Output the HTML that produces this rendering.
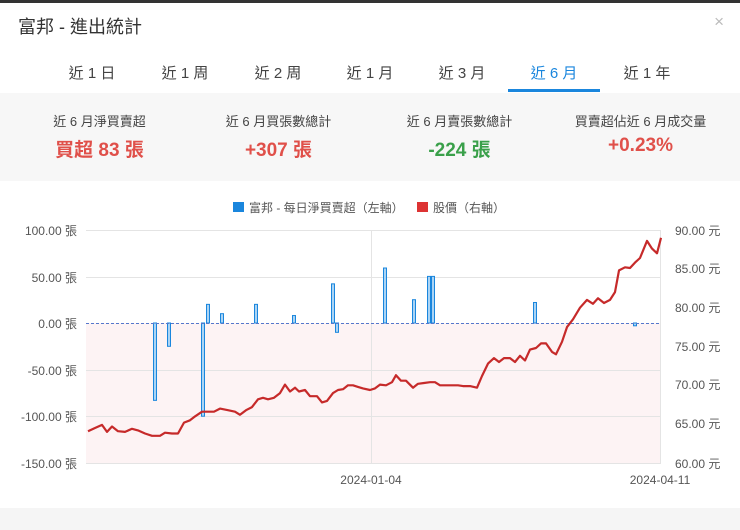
<!DOCTYPE html>
<html><head><meta charset="utf-8"><style>
*{margin:0;padding:0;box-sizing:border-box}
body{width:740px;height:530px;background:#fff;font-family:"Liberation Sans","Noto Sans CJK TC",sans-serif;position:relative;overflow:hidden;color:#333}
.top{position:absolute;left:0;top:0;width:740px;height:3px;background:#333}
.title{position:absolute;left:18px;top:13px;font-size:18px;color:#333}
.close{position:absolute;right:16px;top:12px;font-size:17px;color:#bbb}
.tab{position:absolute;top:62px;font-size:15px;color:#444;transform:translateX(-50%);white-space:nowrap}
.tab.on{color:#1a86dd}
.ul{position:absolute;left:508px;top:89px;width:92px;height:3px;background:#1a86dd}
.stats{position:absolute;left:0;top:93px;width:740px;height:88px;background:#f7f7f7}
.st{position:absolute;top:0;width:185px;text-align:center}
.st .l{position:absolute;top:18px;width:100%;font-size:13px;color:#444}
.st .v{position:absolute;top:42px;width:100%;font-size:19px;font-weight:600}
.red{color:#e0504a}.green{color:#3aa04a}
.bot{position:absolute;left:0;top:508px;width:740px;height:22px;background:#f5f5f5}
svg{position:absolute;left:0;top:0}
svg text{font-family:"Liberation Sans","Noto Sans CJK TC",sans-serif;font-size:12px;fill:#555}
</style></head><body>
<div class="top"></div>
<div class="title">富邦 - 進出統計</div>
<div class="close">×</div>
<div class="tab" style="left:92px">近 1 日</div>
<div class="tab" style="left:185px">近 1 周</div>
<div class="tab" style="left:278px">近 2 周</div>
<div class="tab" style="left:370px">近 1 月</div>
<div class="tab" style="left:462px">近 3 月</div>
<div class="tab on" style="left:554px">近 6 月</div>
<div class="tab" style="left:647px">近 1 年</div>
<div class="ul"></div>
<div class="stats">
<div class="st" style="left:7px"><div class="l">近 6 月淨買賣超</div><div class="v red">買超 83 張</div></div>
<div class="st" style="left:186px"><div class="l">近 6 月買張數總計</div><div class="v red">+307 張</div></div>
<div class="st" style="left:367px"><div class="l">近 6 月賣張數總計</div><div class="v green">-224 張</div></div>
<div class="st" style="left:548px"><div class="l">買賣超佔近 6 月成交量</div><div class="v red">+0.23%</div></div>
</div>
<svg id="c" width="740" height="530">
<rect x="86" y="323" width="575" height="140" fill="#fdf3f4"/>
<g stroke="#e4e4e4" stroke-width="1">
<line x1="86" y1="230.5" x2="661" y2="230.5"/><line x1="86" y1="277.5" x2="661" y2="277.5"/>
<line x1="86" y1="370.5" x2="661" y2="370.5"/><line x1="86" y1="416.5" x2="661" y2="416.5"/>
<line x1="86" y1="463.5" x2="661" y2="463.5"/>
<line x1="371.5" y1="230" x2="371.5" y2="463"/><line x1="660.5" y1="230" x2="660.5" y2="463"/>
</g>
<rect x="233" y="202" width="11" height="10" fill="#1a86dd"/>
<text x="249" y="212">富邦 - 每日淨買賣超（左軸）</text>
<rect x="417" y="202" width="11" height="10" fill="#d33"/>
<text x="433" y="212">股價（右軸）</text>
<g text-anchor="end">
<text x="77" y="235">100.00 張</text><text x="77" y="282">50.00 張</text><text x="77" y="328">0.00 張</text>
<text x="77" y="375">-50.00 張</text><text x="77" y="421">-100.00 張</text><text x="77" y="468">-150.00 張</text>
</g>
<g>
<text x="675" y="235">90.00 元</text><text x="675" y="273">85.00 元</text><text x="675" y="312">80.00 元</text>
<text x="675" y="351">75.00 元</text><text x="675" y="389">70.00 元</text><text x="675" y="428">65.00 元</text><text x="675" y="468">60.00 元</text>
</g>
<text x="371" y="484" text-anchor="middle">2024-01-04</text>
<text x="660" y="484" text-anchor="middle">2024-04-11</text>
<g id="bars" fill="#aad4f5" stroke="#1a86dd" stroke-width="1"></g>
<line x1="86" y1="323.5" x2="661" y2="323.5" stroke="#5577cc" stroke-width="1" stroke-dasharray="3,2"/>
<polyline id="pl" fill="none" stroke="#c62a2a" stroke-width="2.2" stroke-linejoin="round"/>
</svg>
<div class="bot"></div>
<script>
var b=[[155,-83],[169,-25],[203,-100],[208,20],[222,10],[256,20],[294,8],[333,42],[337,-10],[385,59],[414,25],[429,50],[433,50],[535,22],[635,-3]];
var g=document.getElementById('bars'),s='';
b.forEach(function(p){var y0=323,y1=323-p[1]*0.932;s+='<rect x="'+(p[0]-1.5)+'" y="'+Math.min(y0,y1)+'" width="3" height="'+Math.abs(y1-y0)+'"/>';});
g.innerHTML=s;
var d=[88,64.1,95,64.5,102,64.9,107,64.0,112,64.7,118,64.1,125,64.0,132,64.4,138,64.2,145,63.8,152,63.5,160,63.5,165,63.9,172,63.8,178,63.8,184,65.2,190,65.5,195,66.0,202,66.6,206,66.6,214,66.6,220,67.0,228,66.8,235,66.6,240,66.2,246,66.8,252,67.2,258,68.2,263,68.4,268,68.2,274,68.4,280,69.0,285,70.1,290,69.2,295,69.7,299,69.2,305,69.4,310,68.6,317,68.6,322,67.8,327,68.0,333,69.0,338,69.4,343,69.5,348,70.0,353,70.0,358,69.8,363,69.6,370,69.4,375,69.6,380,70.1,386,70.0,392,70.4,396,71.3,401,70.6,406,70.6,413,69.7,418,70.2,424,70.3,430,70.4,435,70.4,440,70.0,447,70.0,453,70.0,458,70.0,463,69.9,470,69.9,477,69.7,482,71.2,488,72.8,494,73.5,499,73.0,504,73.5,510,73.5,515,73.0,520,73.8,525,73.2,530,74.6,536,74.8,541,75.4,546,75.4,552,74.3,556,74.0,562,75.6,567,77.5,573,78.5,580,80.0,587,81.0,593,80.5,598,81.2,604,80.6,610,81.0,615,82.0,619,84.8,625,85.2,630,85.1,635,85.8,640,86.4,647,88.6,652,87.6,657,87.0,661,89.0];
var pts=[];for(var i=0;i<d.length;i+=2)pts.push(d[i]+','+(463-(d[i+1]-60)*7.767).toFixed(1));
document.getElementById('pl').setAttribute('points',pts.join(' '));
</script>
</body></html>
